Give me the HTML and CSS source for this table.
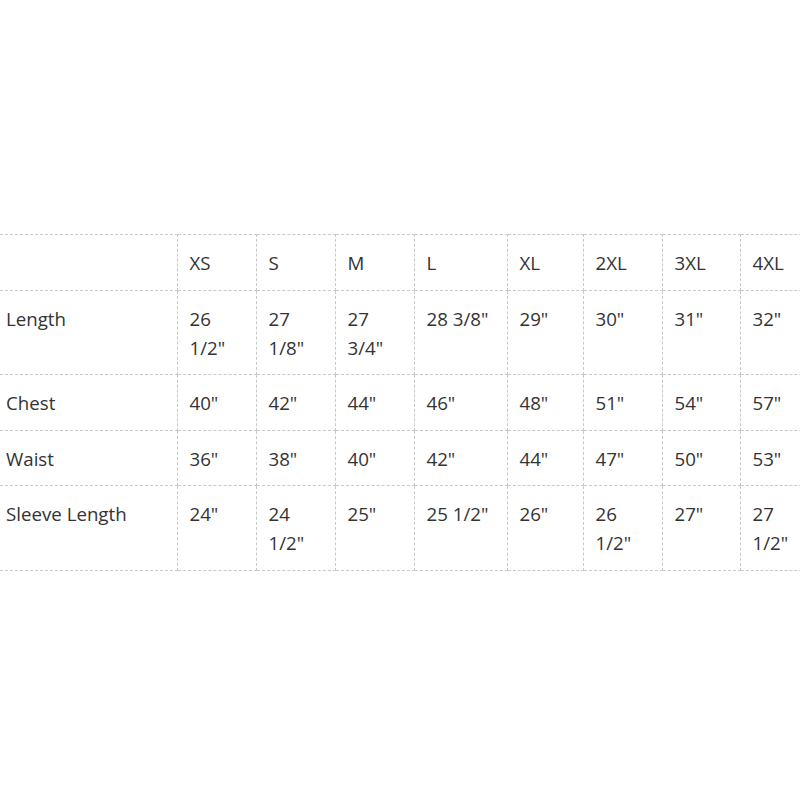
FILE: index.html
```html
<!DOCTYPE html>
<html>
<head>
<meta charset="utf-8">
<link rel="stylesheet" href="styles.css">
</head>
<body>
<div class="wrap">
<table class="size-table">
  <colgroup>
    <col class="c-label"><col class="c-n"><col class="c-n"><col class="c-n"><col class="c-w"><col class="c-m"><col class="c-n"><col class="c-n2"><col class="c-last">
  </colgroup>
  <tr><td></td><td>XS</td><td>S</td><td>M</td><td>L</td><td>XL</td><td>2XL</td><td>3XL</td><td>4XL</td></tr>
  <tr><td>Length</td><td>26 1/2"</td><td>27 1/8"</td><td>27 3/4"</td><td>28 3/8"</td><td>29"</td><td>30"</td><td>31"</td><td>32"</td></tr>
  <tr><td>Chest</td><td>40"</td><td>42"</td><td>44"</td><td>46"</td><td>48"</td><td>51"</td><td>54"</td><td>57"</td></tr>
  <tr><td>Waist</td><td>36"</td><td>38"</td><td>40"</td><td>42"</td><td>44"</td><td>47"</td><td>50"</td><td>53"</td></tr>
  <tr><td>Sleeve Length</td><td>24"</td><td>24 1/2"</td><td>25"</td><td>25 1/2"</td><td>26"</td><td>26 1/2"</td><td>27"</td><td>27 1/2"</td></tr>
</table>
</div>
</body>
</html>
```
FILE: styles.css
```css
html, body {
  margin: 0;
  padding: 0;
  background: #fff;
}
.wrap {
  padding-top: 234px;
  width: 800px;
  overflow: hidden;
}
.size-table {
  border-collapse: collapse;
  table-layout: fixed;
  width: 806px;
  font-family: "Open Sans", "Noto Sans", sans-serif;
  font-size: 18.7px;
  line-height: 29px;
  color: #333;
}
.c-label { width: 177px; }
.c-n { width: 79px; }
.c-w { width: 93px; }
.c-m { width: 76px; }
.c-n2 { width: 78px; }
.c-last { width: 66px; }
.size-table td {
  border: 1px dashed #c8c8c8;
  padding: 13px 8px 12.5px 12px;
  vertical-align: top;
  text-align: left;
}
.size-table td:first-child {
  border-left: none;
  padding-left: 6px;
}
```
